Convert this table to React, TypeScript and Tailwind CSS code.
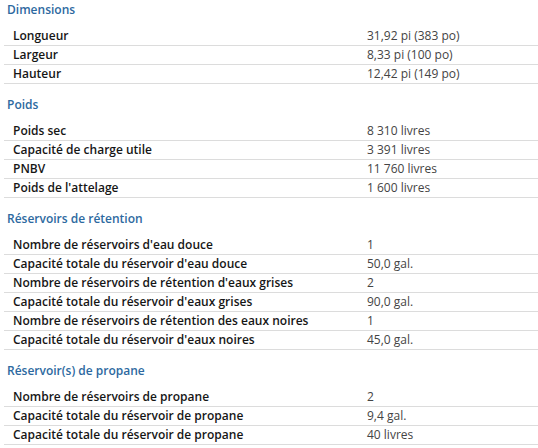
import React from 'react';

type Row = [string, string];

const sections: { title: string; rows: Row[] }[] = [
  {
    title: 'Dimensions',
    rows: [
      ['Longueur', '31,92 pi (383 po)'],
      ['Largeur', '8,33 pi (100 po)'],
      ['Hauteur', '12,42 pi (149 po)'],
    ],
  },
  {
    title: 'Poids',
    rows: [
      ['Poids sec', '8 310 livres'],
      ['Capacité de charge utile', '3 391 livres'],
      ['PNBV', '11 760 livres'],
      ["Poids de l'attelage", '1 600 livres'],
    ],
  },
  {
    title: 'Réservoirs de rétention',
    rows: [
      ["Nombre de réservoirs d'eau douce", '1'],
      ["Capacité totale du réservoir d'eau douce", '50,0 gal.'],
      ["Nombre de réservoirs de rétention d'eaux grises", '2'],
      ["Capacité totale du réservoir d'eaux grises", '90,0 gal.'],
      ['Nombre de réservoirs de rétention des eaux noires', '1'],
      ["Capacité totale du réservoir d'eaux noires", '45,0 gal.'],
    ],
  },
  {
    title: 'Réservoir(s) de propane',
    rows: [
      ['Nombre de réservoirs de propane', '2'],
      ['Capacité totale du réservoir de propane', '9,4 gal.'],
      ['Capacité totale du réservoir de propane', '40 livres'],
    ],
  },
];

export default function App() {
  return (
    <div className="w-[538px] h-[448px] overflow-hidden bg-white font-['Open_Sans',sans-serif]">
      {sections.map((s) => (
        <section key={s.title} className="mb-[11px]">
          <h2 className="pl-[7px] h-[27px] pt-[2px] text-[12px] leading-[16px] font-semibold text-[#2d69a0]">
            {s.title}
          </h2>
          <div className="ml-[4px]">
            {s.rows.map(([k, v], i) => (
              <div key={i} className="flex h-[19px] items-center border-b border-[#dcdcdc]">
                <div className="w-[363px] pl-[9px] text-[12px] font-semibold text-[#161616]">{k}</div>
                <div className="text-[12px] text-[#444]">{v}</div>
              </div>
            ))}
          </div>
        </section>
      ))}
    </div>
  );
}
